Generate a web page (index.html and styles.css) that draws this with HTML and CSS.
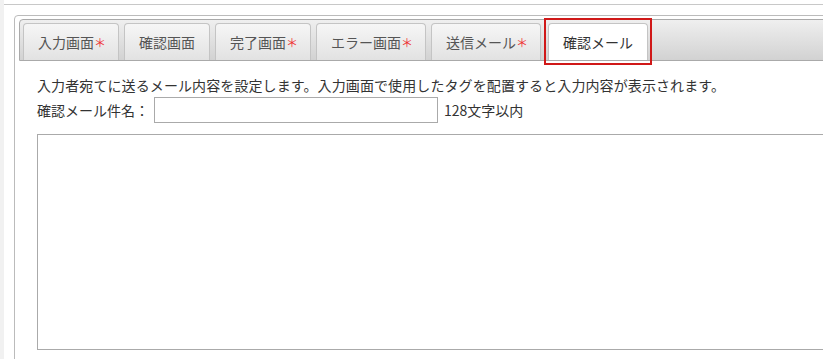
FILE: index.html
```html
<!DOCTYPE html>
<html lang="ja">
<head>
<meta charset="UTF-8">
<title>確認メール設定</title>
<link rel="stylesheet" href="styles.css">
</head>
<body>

<div class="page">
  <div class="box">
    <ul class="tabs">
      <li class="tab">入力画面<span class="req">＊</span></li>
      <li class="tab">確認画面</li>
      <li class="tab">完了画面<span class="req">＊</span></li>
      <li class="tab">エラー画面<span class="req">＊</span></li>
      <li class="tab">送信メール<span class="req">＊</span></li>
      <li class="tab active">確認メール</li>
    </ul>

    <div class="panel">
      <p class="note">入力者宛てに送るメール内容を設定します。入力画面で使用したタグを配置すると入力内容が表示されます。</p>
      <div class="subject-row">
        <label for="subject">確認メール件名：</label>
        <input type="text" id="subject" name="subject">
        <span class="limit">128文字以内</span>
      </div>
      <textarea class="body-text" name="body"></textarea>
    </div>
  </div>
</div>

</body>
</html>
```

FILE: styles.css
```css
html, body {
  margin: 0;
  padding: 0;
  overflow: hidden;
}
body {
  font-family: "Noto Sans CJK JP", "Noto Sans", sans-serif;
  font-size: 14px;
  color: #333;
  background: linear-gradient(to right, #f1f1f1 0, #f1f1f1 4px, #fff 4px);
  height: 359px;
}
.page {
  margin: 4px 0 0 4px;
  border-top: 1px solid #c8c8c8;
  padding: 10px 0 0 10px;
}
.box {
  width: 900px;
  height: 400px;
  border: 1px solid #bbb;
  border-radius: 4px;
  padding: 3px 4px;
  background: #fff;
}
.tabs {
  list-style: none;
  margin: 0;
  padding: 3px 0 0 3px;
  height: 37px;
  display: flex;
  align-items: flex-end;
  border: 1px solid #aaa;
  border-radius: 4px 4px 0 0;
  background: linear-gradient(#efefef, #d2d2d2);
}
.tab {
  position: relative;
  height: 36px;
  line-height: 36px;
  padding: 0 14px;
  margin-right: 5px;
  border: 1px solid #c4c4c4;
  border-bottom: none;
  border-radius: 4px 4px 0 0;
  background: linear-gradient(#f6f6f6, #e2e2e2);
  color: #555;
  white-space: nowrap;
}
.tab .req {
  display: inline-block;
  width: 9px;
  margin-left: 1px;
  overflow: visible;
  text-align: center;
  color: #e33;
  font-size: 12px;
  text-indent: -1px;
}
.tab.active {
  background: #fff;
  color: #333;
  margin-left: 2px;
}
.tab.active::after {
  content: "";
  position: absolute;
  top: -6px;
  left: -5px;
  right: -5px;
  bottom: -5px;
  border: 2px solid #d01818;
}
.panel {
  padding: 14px 0 0 18px;
}
.note {
  margin: 0;
  line-height: 20px;
  letter-spacing: 0.1px;
}
.subject-row {
  display: flex;
  align-items: center;
  margin-top: 2px;
}
.subject-row input {
  width: 284px;
  height: 26px;
  box-sizing: border-box;
  margin: 0 6px 0 5px;
  padding: 0 2px;
  border: 1px solid #aaa;
  font-size: 14px;
}
.body-text {
  display: block;
  margin-top: 11px;
  width: 840px;
  height: 216px;
  box-sizing: border-box;
  border: 1px solid #aaa;
  resize: none;
}
```
